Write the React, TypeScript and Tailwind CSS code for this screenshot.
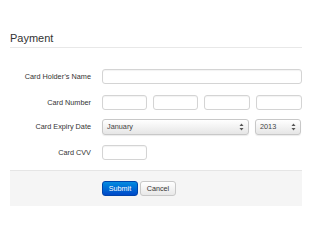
const font = { fontFamily: '"Liberation Sans", Arial, sans-serif' };

const Arrows = () => (
  <svg width="5" height="8" viewBox="0 0 5 8" className="shrink-0">
    <path d="M2.5 0.5 L4.5 3 L0.5 3 Z" fill="#555" />
    <path d="M2.5 7.5 L4.5 5 L0.5 5 Z" fill="#555" />
  </svg>
);

const FakeSelect = ({ value, width }: { value: string; width: string }) => (
  <div
    className={`${width} h-[16px] flex items-center justify-between pl-[4px] pr-[4px] rounded-[3px] border border-[#c8c8c8] bg-gradient-to-b from-[#ffffff] to-[#e6e6e6] shadow-[0_1px_1px_rgba(0,0,0,0.08)] text-[7.3px] text-[#444]`}
  >
    <span>{value}</span>
    <Arrows />
  </div>
);

const TextBox = ({ width }: { width: string }) => (
  <input
    type="text"
    className={`${width} h-[15px] rounded-[3px] border border-[#d4d4d4] bg-white shadow-[inset_0_1px_1px_rgba(0,0,0,0.05)] outline-none`}
  />
);

const Row = ({ label, className, children }: { label: string; className: string; children: React.ReactNode }) => (
  <div className={`flex items-center ${className}`}>
    <label className="w-[81px] text-right text-[7.3px] text-[#333] leading-none">{label}</label>
    <div className="ml-[11px] flex items-center">{children}</div>
  </div>
);

export default function App() {
  return (
    <div className="w-[320px] h-[240px] bg-white pl-[10px]" style={font}>
      <div className="w-[292px]">
        <div className="pt-[31px] h-[48px] border-b border-[#e8e8e8] text-[11px] leading-[14px] text-[#333]">
          Payment
        </div>

        <Row label="Card Holder’s Name" className="mt-[21px]">
          <TextBox width="w-[200px]" />
        </Row>

        <Row label="Card Number" className="mt-[11px]">
          <div className="flex gap-[6px]">
            <TextBox width="w-[45px]" />
            <TextBox width="w-[45px]" />
            <TextBox width="w-[46px]" />
            <TextBox width="w-[46px]" />
          </div>
        </Row>

        <Row label="Card Expiry Date" className="mt-[9px]">
          <div className="flex gap-[6px]">
            <FakeSelect value="January" width="w-[147px]" />
            <FakeSelect value="2013" width="w-[46px]" />
          </div>
        </Row>

        <Row label="Card CVV" className="mt-[10px]">
          <TextBox width="w-[45px]" />
        </Row>

        <div className="mt-[10px] h-[36px] bg-[#f5f5f5] border-t border-[#e5e5e5] flex items-start pt-[10px] pl-[92px] gap-[2px]">
          <button className="w-[36px] h-[15px] rounded-[3px] border border-[#0044aa] bg-gradient-to-b from-[#0a8be0] to-[#0048c8] text-white text-[7.2px] leading-none">
            Submit
          </button>
          <button className="w-[36px] h-[15px] rounded-[3px] border border-[#c8c8c8] bg-gradient-to-b from-[#ffffff] to-[#e8e8e8] text-[#333] text-[7.2px] leading-none">
            Cancel
          </button>
        </div>
      </div>
    </div>
  );
}
